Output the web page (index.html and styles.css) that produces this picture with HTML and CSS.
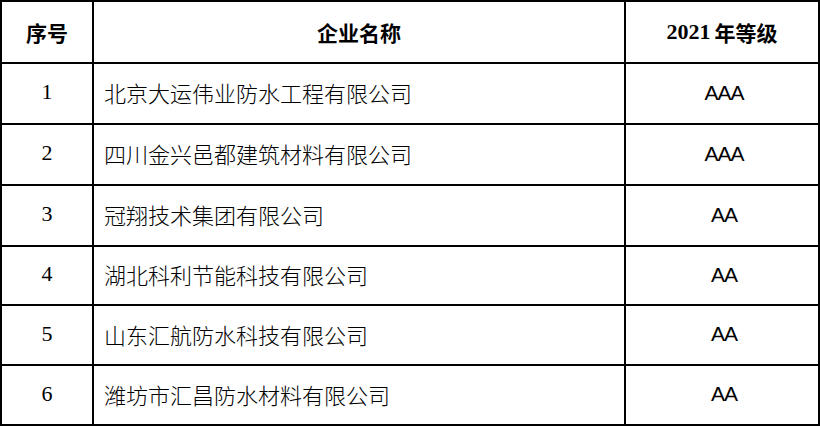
FILE: index.html
```html
<!DOCTYPE html>
<html lang="zh-CN">
<head>
<meta charset="utf-8">
<title>企业等级</title>
<link rel="stylesheet" href="styles.css">
</head>
<body>
<div class="grade-table">
  <div class="cell head num">序号</div>
  <div class="cell head name-h">企业名称</div>
  <div class="cell head grade-h"><span class="year">2021</span> 年等级</div>

  <div class="cell num">1</div>
  <div class="cell name">北京大运伟业防水工程有限公司</div>
  <div class="cell grade">AAA</div>

  <div class="cell num">2</div>
  <div class="cell name">四川金兴邑都建筑材料有限公司</div>
  <div class="cell grade">AAA</div>

  <div class="cell num">3</div>
  <div class="cell name">冠翔技术集团有限公司</div>
  <div class="cell grade">AA</div>

  <div class="cell num">4</div>
  <div class="cell name">湖北科利节能科技有限公司</div>
  <div class="cell grade">AA</div>

  <div class="cell num">5</div>
  <div class="cell name">山东汇航防水科技有限公司</div>
  <div class="cell grade">AA</div>

  <div class="cell num">6</div>
  <div class="cell name">潍坊市汇昌防水材料有限公司</div>
  <div class="cell grade">AA</div>
</div>
</body>
</html>
```
FILE: styles.css
```css
html, body {
  margin: 0;
  padding: 0;
  background: #ffffff;
}

.grade-table {
  width: 820px;
  height: 426px;
  box-sizing: border-box;
  padding: 2px;
  background: #000000;
  display: grid;
  grid-template-columns: 90px 530px 192px;
  grid-template-rows: 60px 59px 59px 59px 57px 58px 58px;
  gap: 2px;
  font-family: "Noto Sans CJK SC", sans-serif;
  color: #000000;
}

.cell {
  background: #ffffff;
  display: flex;
  align-items: center;
  justify-content: center;
  font-size: 22px;
  font-weight: 300;
  line-height: 1;
  padding-bottom: 3px;
}

.head {
  font-weight: 700;
  font-size: 21px;
  padding-bottom: 0;
}

.head .year {
  font-family: "Liberation Serif", serif;
  font-weight: 700;
  font-size: 22px;
  margin-right: 4px;
}

.num {
  font-family: "Liberation Serif", "Noto Sans CJK SC", serif;
  font-size: 22px;
  font-weight: 400;
}

.head.num {
  font-family: "Noto Sans CJK SC", sans-serif;
  font-size: 21px;
  font-weight: 700;
}

.name {
  justify-content: flex-start;
  padding-left: 10px;
}

.grade {
  font-family: "Liberation Sans", sans-serif;
  font-weight: 400;
  font-size: 21px;
  letter-spacing: -1px;
  padding-left: 4px;
}
```
